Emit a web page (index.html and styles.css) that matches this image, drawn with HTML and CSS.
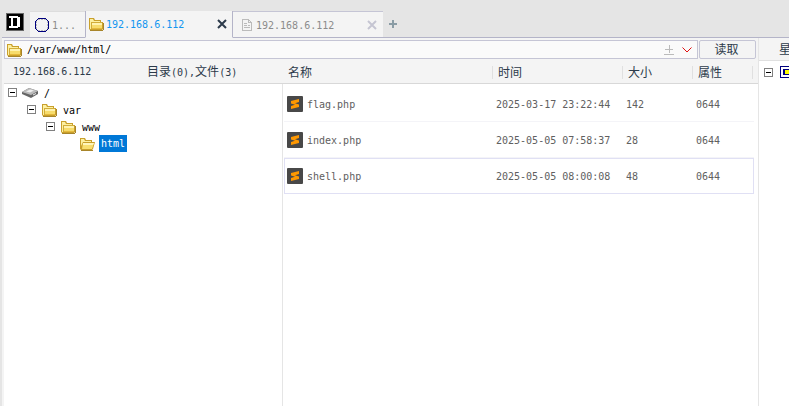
FILE: index.html
```
<!DOCTYPE html>
<html lang="zh-CN">
<head>
<meta charset="utf-8">
<title>192.168.6.112</title>
<link rel="stylesheet" href="styles.css">
</head>
<body>
<svg class="defs" aria-hidden="true" shape-rendering="crispEdges">
  <symbol id="folder" viewBox="0 0 16 14">
    <path d="M1 1h5l1 2h6v2h2v7l-1 1H2l-1-1z" fill="#c9a02c"/>
    <path d="M2 2h3l1 2h6v1H5v7H2z" fill="#fdf0a0"/>
    <path d="M4 6h10v5H4z" fill="#f7dc6c"/>
    <path d="M4 6h10v2H4z" fill="#fff3b0"/>
    <path d="M3 5h1v7H3zM4 5h10v1H4z" fill="#d2ad3a"/>
    <path d="M4 11h10v1H4z" fill="#e5b93c"/>
    <path d="M2 13h13v1H2zM15 6h1v7h-1z" fill="#a8852a"/>
  </symbol>
  <symbol id="folder-open" viewBox="0 0 16 14">
    <path d="M1 1h5l1 2h6v2h3l-2 7-1 1H2l-1-1z" fill="#c9a02c"/>
    <path d="M2 2h3l1 2h6v1H4L2 9z" fill="#fdf0a0"/>
    <path d="M4 6h11l-2 6H3z" fill="#f9df70"/>
    <path d="M4 6h11l-1 2H4z" fill="#fff6bc"/>
    <path d="M2 13h12v1H2z" fill="#a8852a"/>
  </symbol>
  <symbol id="sublime" viewBox="0 0 16 16">
    <rect width="16" height="16" rx="1" fill="#484848"/>
    <path d="M4 5l8-2v3L8 7.200l4 1.300v2.500L4 13v-3l4-1.200-4-1.300z" fill="#ff9800"/>
  </symbol>
</svg>
<nav class="tabs">
  <a class="home" href="#" aria-label="主页"><svg width="18" height="18" viewBox="0 0 18 18" shape-rendering="crispEdges"><path d="M0 0h18v18H0z" fill="#666"/><path d="M1 1h16v16H1z" fill="#000"/><path d="M3 3h9v1h2v10h-2v1H3v-2h2V5H3zM7 5v8h4V5z" fill="#fff" fill-rule="evenodd"/></svg></a>
  <a class="tab tab-short" href="#"><svg width="14" height="14" viewBox="0 0 14 14" shape-rendering="crispEdges"><path d="M3 0h8v1H3zM3 13h8v1H3zM0 3h1v8H0zM13 3h1v8h-1z" fill="#000080"/><path d="M2 1h1v1H2zM1 2h1v1H1zM11 1h1v1h-1zM12 2h1v1h-1zM1 11h1v1H1zM2 12h1v1H2zM12 11h1v1h-1zM11 12h1v1h-1z" fill="#000080"/><path d="M3 1.500h8M3 12.500h8M1.500 3v8M12.500 3v8" fill="none" stroke="#bbb" stroke-dasharray="2 1"/></svg><span>1...</span></a>
  <div class="tab tab-active"><svg width="16" height="14"><use href="#folder"/></svg><span>192.168.6.112</span><button class="close" type="button" aria-label="关闭"><svg width="10" height="10" viewBox="0 0 10 10"><path d="M1 1l8 8M9 1L1 9" stroke="currentColor" stroke-width="2"/></svg></button></div>
  <div class="tab tab-idle"><svg width="12" height="12" viewBox="0 0 12 12" shape-rendering="crispEdges"><path d="M1.500.5h6l3 3v8h-9zM7.500.5v3h3M3 4.500h3M3 6.500h3M3 8.500h6M7 6.500h2" fill="none" stroke="#bbb"/></svg><span>192.168.6.112</span><button class="close" type="button" aria-label="关闭"><svg width="10" height="10" viewBox="0 0 10 10"><path d="M1 1l8 8M9 1L1 9" stroke="currentColor" stroke-width="2"/></svg></button></div>
  <div class="tab-rest"><button class="add" type="button" aria-label="新建"><svg width="8" height="8" viewBox="0 0 8 8"><path d="M4 0v8M0 4h8" stroke="currentColor" stroke-width="2"/></svg></button></div>
</nav>
<main class="workspace">
  <section class="browser">
    <form class="address">
      <div class="path">
        <svg width="16" height="14"><use href="#folder"/></svg>
        <input type="text" aria-label="路径" value="/var/www/html/">
        <button type="button" class="mini" aria-label="书签"><svg width="10" height="10" viewBox="0 0 10 10" shape-rendering="crispEdges"><path d="M5 0v8M1 4.500h8M0 9.500h10" stroke="#bbb"/></svg></button>
        <button type="button" class="mini" aria-label="历史"><svg width="10" height="6" viewBox="0 0 10 6"><path d="M.5.5L5 5 9.500.5" fill="none" stroke="#e01010"/></svg></button>
      </div>
      <button class="read" type="button">读取</button>
    </form>
    <div class="panes">
      <aside class="dirs">
        <div class="status"><span class="host">192.168.6.112</span><span><b>目录</b>(0),<b>文件</b>(3)</span></div>
        <ul class="tree">
          <li class="d0"><i class="toggle"></i><svg width="16" height="10" viewBox="0 0 16 10"><path d="M0 4l7-4 9 3v3l-7 4-9-4z" fill="#666"/><path d="M0 4l7-4 9 3-7 4z" fill="#bbb"/><path d="M4 3.500l4-2 4 1-4 2z" fill="#eee"/><path d="M11 7l3-1.500" stroke="#eee"/></svg><span>/</span></li>
          <li class="d1"><i class="toggle"></i><svg width="16" height="14"><use href="#folder"/></svg><span>var</span></li>
          <li class="d2"><i class="toggle"></i><svg width="16" height="14"><use href="#folder"/></svg><span>www</span></li>
          <li class="d3"><svg width="16" height="14"><use href="#folder-open"/></svg><span class="selected">html</span></li>
        </ul>
      </aside>
      <div class="files">
        <table>
          <colgroup><col><col class="c-time"><col class="c-size"><col class="c-attr"><col class="c-end"></colgroup>
          <thead><tr><th>名称</th><th>时间</th><th>大小</th><th>属性</th><th></th></tr></thead>
          <tbody>
            <tr><td><div class="name"><svg width="16" height="16"><use href="#sublime"/></svg><span>flag.php</span></div></td><td>2025-03-17 23:22:44</td><td>142</td><td>0644</td><td></td></tr>
            <tr><td><div class="name"><svg width="16" height="16"><use href="#sublime"/></svg><span>index.php</span></div></td><td>2025-05-05 07:58:37</td><td>28</td><td>0644</td><td></td></tr>
            <tr class="current"><td><div class="name"><svg width="16" height="16"><use href="#sublime"/></svg><span>shell.php</span></div></td><td>2025-05-05 08:00:08</td><td>48</td><td>0644</td><td></td></tr>
          </tbody>
        </table>
      </div>
    </div>
  </section>
  <aside class="side">
    <div class="side-head">星</div>
    <div class="side-row"><i class="toggle"></i><svg width="16" height="12" viewBox="0 0 16 12" shape-rendering="crispEdges"><path d="M0 0h16v12H0z" fill="#000080"/><path d="M1 1h14v10H1z" fill="#fff"/><path d="M3 3h10v6H3z" fill="#000080"/><path d="M5 4h7v4H5z" fill="#ff0"/></svg></div>
  </aside>
</main>
</body>
</html>
```
FILE: styles.css
```
* { box-sizing: border-box; }
body {
  margin: 0;
  min-height: 100vh;
  display: flex;
  flex-direction: column;
  background: #e5e5e5;
  color: #2c3a4a;
  font: 10px/14px "DejaVu Sans Mono", "Noto Sans CJK SC", monospace;
  overflow: hidden;
}
svg { flex: none; display: block; }
button, input { font: inherit; color: inherit; border: 0; padding: 0; background: none; }
a { color: inherit; text-decoration: none; }
.defs { position: absolute; width: 0; height: 0; }

.tabs { display: flex; padding: 11px 0 0 2px; height: 38px; }
.tabs > * { border-bottom: 1px solid #b4b4c8; }
.home { width: 28px; padding: 2px 0 0 4px; }
.tab {
  display: flex;
  align-items: center;
  background: #f4f4f4;
  color: #8c8c8c;
}
.tab span, .name span { padding-top: 2px; }
.tab-short { width: 55px; padding-left: 5px; gap: 3px; border-top: 1px solid #ddd; }
.tab-active {
  width: 148px;
  padding: 0 5px 0 2px;
  gap: 2px;
  color: #1296f0;
  border-left: 1px solid #b4b4c8;
  border-right: 1px solid #b4b4c8;
}
.tabs > .tab-active { border-bottom-color: #f4f4f4; }
.tab-idle { width: 150px; padding: 0 6px 0 8px; gap: 3px; border-top: 1px solid #c5c5d5; }
.close { margin-left: auto; color: #2c3a4a; }
.tab-idle .close { color: #c5c5d2; }
.tab-rest { flex: 1; display: flex; align-items: center; padding-left: 6px; color: #8a9ca5; }

.workspace { flex: 1; display: flex; border-left: 2px solid #e5e5e5; background: #f4f4f4; }
.browser { flex: 1; min-width: 0; display: flex; flex-direction: column; padding-left: 2px; }
.address { display: flex; gap: 1px; padding: 2px 2px 0 0; height: 21px; }
.path {
  flex: 1;
  display: flex;
  align-items: center;
  gap: 8px;
  padding: 0 5px 0 2px;
  border: 1px solid #c5c5d5;
  background: #fafafa;
}
.path > svg { margin-left: -1px; }
.path input { flex: 1; min-width: 0; margin-left: -3px; padding-top: 1px; color: #000; outline: 0; }
.read { width: 57px; border: 1px solid #c5c5d5; border-radius: 2px; font-size: 12px; padding-right: 2px; }

.panes { flex: 1; display: flex; }
.dirs { width: 278px; background: #fff; }
.status {
  display: flex;
  align-items: center;
  height: 25px;
  padding: 2px 0 0 9px;
  background: #f4f4f4;
  border-bottom: 1px solid #d8d8d8;
}
.status b { font-size: 12px; font-weight: 400; }
.host { width: 134px; }
.tree { margin: 0; padding: 0 0 0 4px; list-style: none; color: #000; }
.tree li { display: flex; align-items: center; height: 17px; gap: 4px; }
.tree svg { margin-left: 1px; }
.tree span { padding: 2px 0 0 2px; }
.tree .d1 { padding-left: 19px; }
.tree .d2 { padding-left: 38px; }
.tree .d3 { padding-left: 70px; }
.toggle {
  flex: none;
  width: 9px;
  height: 9px;
  border: 1px solid #808080;
  background: linear-gradient(#000, #000) center / 5px 1px no-repeat #fff;
}
.tree .selected { padding: 2px 2px 1px; background: #0078d7; color: #fff; }

.files {
  flex: 1;
  min-width: 0;
  padding: 0 4px 0 2px;
  background:
    linear-gradient(#f4f4f4 24px, #d8d8d8 24px) 0 0 / 100% 25px no-repeat,
    linear-gradient(#e5e5e5, #e5e5e5) 0 0 / 1px 100% no-repeat #fff;
}
table { width: 100%; table-layout: fixed; border-collapse: separate; border-spacing: 0; color: #606060; }
.c-time { width: 130px; }
.c-size { width: 70px; }
.c-attr { width: 60px; }
.c-end { width: 2px; }
th {
  height: 25px;
  padding: 3px 0 0 6px;
  text-align: left;
  font-weight: 400;
  font-size: 12px;
  color: #2c3a4a;
  background: linear-gradient(#e0e0e0, #e0e0e0) 0 7px / 1px 13px no-repeat;
}
th:first-child { padding-left: 4px; background: none; }
th:last-child, td:last-child { padding: 0; }
tbody::before { content: ""; display: table-row; height: 2px; }
td { height: 36px; padding: 2px 0 0 4px; border-bottom: 1px solid #f4f4f8; }
td:first-child { padding: 0 0 0 3px; }
.name { display: flex; align-items: center; gap: 4px; }
.current td { border-top: 1px solid #e0e0f4; border-bottom-color: #e0e0f4; }
.current td:first-child { padding-left: 2px; border-left: 1px solid #e0e0f4; }
.current td:last-child { border-right: 1px solid #e0e0f4; }

.side { width: 31px; overflow: hidden; border-left: 1px solid #e5e5e5; background: #fff; }
.side-head {
  height: 23px;
  padding: 2px 0 0 20px;
  font-size: 12px;
  line-height: 20px;
  background: #f4f4f4;
  border-bottom: 1px solid #e0e0e0;
}
.side-row { display: flex; align-items: center; gap: 7px; height: 22px; padding-left: 5px; }
```
